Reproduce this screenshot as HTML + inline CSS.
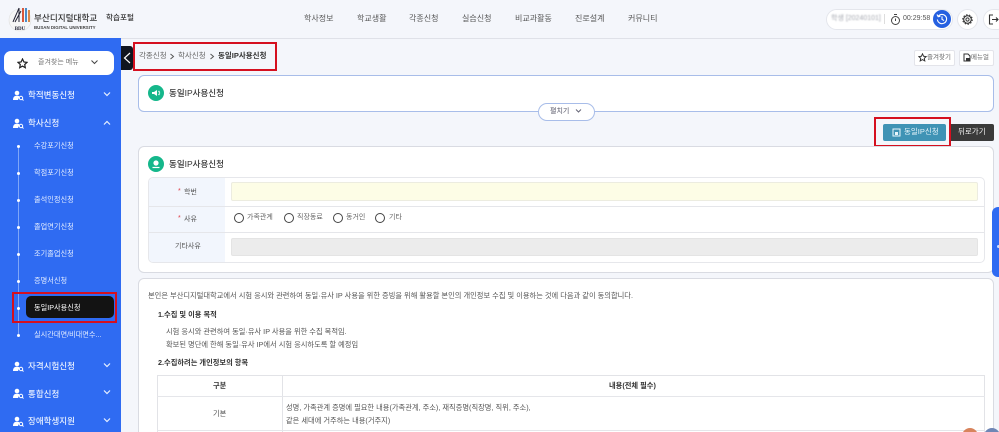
<!DOCTYPE html>
<html lang="ko"><head><meta charset="utf-8"><title>동일IP사용신청</title>
<style>
html,body{margin:0;padding:0;width:999px;height:432px;overflow:hidden}
body{background:#f4f6fb;font-family:"Liberation Sans","Noto Sans CJK KR",sans-serif;color:#444}
#w{left:0;top:0;width:999px;height:432px;overflow:hidden;background:#f4f6fb;filter:blur(.25px)}
div,span.a,svg.a{position:absolute}
.t{position:absolute;white-space:nowrap;line-height:12px;font-size:7.5px}
.nav{font-size:8px;color:#555;top:13px}
.side{background:#2f6bf2;left:0;top:38px;width:121px;height:394px}
.m{color:#e8f0ff;font-size:8.5px;left:28px;font-weight:500}
.s{color:#e3ecff;font-size:7.2px;left:34px}
.dot{left:17px;width:3px;height:3px;border-radius:50%;background:#fff}
.card{background:#fff;border:1px solid #d9dbe2;border-radius:6px;box-sizing:border-box}
.lb{background:#f2f6fd;left:149px;width:76px}
.line{background:#e5e6ea;height:1px}
.red{border:2px solid #d5101f;box-sizing:border-box}
.radio{width:10px;height:10px;box-sizing:border-box;border:1.2px solid #444;border-radius:50%;top:213px;background:#fff}
</style></head><body>
<svg width="0" height="0" style="position:absolute"><defs><g id="u"><circle cx="5" cy="3" r="2.3" fill="#fff"/><path d="M1 10C1 6.5 3 5.8 5 5.8C6 5.8 7 6 7.5 6.6L6 10Z" fill="#fff"/><circle cx="9" cy="8" r="1.7" fill="none" stroke="#fff"/><path d="M10.2 9.2L11.5 10.5" stroke="#fff"/></g></defs></svg>
<div id="w">

<!-- header -->
<div style="left:0;top:38px;width:999px;height:1px;background:#dfe1e8"></div>
<svg class="a" style="left:8px;top:5px" width="24" height="28" viewBox="0 0 24 28">
<circle cx="12" cy="15" r="11" fill="#f6f6f6" stroke="#e0e0e0" stroke-width=".6"/>
<path d="M5 17C7 12 9 8 11 3M11 3V17M7 17L13 6" stroke="#223" fill="none" stroke-width="1"/>
<rect x="14" y="3" width="2" height="14" fill="#d8583a"/><rect x="17" y="3" width="2" height="14" fill="#4b8ec8"/><rect x="20" y="5" width="2" height="12" fill="#d8884a"/>
<text x="12" y="25" font-size="5" font-weight="700" text-anchor="middle" fill="#223" font-family="Liberation Serif">BDU</text></svg>
<span class="t" style="left:34px;top:12px;font-size:8.6px;color:#333;font-weight:500">부산디지털대학교</span>
<span class="t" style="left:34px;top:22px;font-size:4.4px;color:#444;font-weight:700;line-height:12px">BUSAN DIGITAL UNIVERSITY</span>
<span class="t" style="left:106px;top:12px;font-size:7.6px;color:#333;font-weight:500">학습포털</span>

<span class="t nav" style="left:304px">학사정보</span>
<span class="t nav" style="left:357px">학교생활</span>
<span class="t nav" style="left:409px">각종신청</span>
<span class="t nav" style="left:462px">실습신청</span>
<span class="t nav" style="left:515px">비교과활동</span>
<span class="t nav" style="left:575px">진로설계</span>
<span class="t nav" style="left:628px">커뮤니티</span>

<div style="left:826px;top:9px;width:127px;height:21px;border-radius:11px;background:#fff;border:1px solid #e4e6ec;box-sizing:border-box"></div>
<span class="t" style="left:831px;top:13px;font-size:7px;color:#a5a8b0;filter:blur(.7px)">학생 [20240101]</span>
<div style="left:884px;top:14px;width:1px;height:10px;background:#ddd"></div>
<svg class="a" style="left:890px;top:13px" width="11" height="13" viewBox="0 0 11 13"><circle cx="5.5" cy="7.5" r="4" fill="none" stroke="#444"/><path d="M4 1.5H7M5.5 5.5V8" stroke="#444"/></svg>
<span class="t" style="left:903px;top:13px;font-size:7px;color:#555">00:29:58</span>
<div style="left:933px;top:10px;width:18px;height:18px;border-radius:50%;background:#2560e0"></div>
<svg class="a" style="left:936px;top:13px" width="12" height="12" viewBox="0 0 12 12"><path d="M2.2 3.4A4.6 4.6 0 1 1 1.4 6.5M6 3.4V6.3L8 7.6M1 1.5L2.2 3.7L4.4 3.2" fill="none" stroke="#fff" stroke-width="1.1"/></svg>
<div style="left:957px;top:9px;width:21px;height:21px;border-radius:50%;background:#fff;border:1px solid #e4e6ec;box-sizing:border-box"></div>
<svg class="a" style="left:962px;top:14px" width="11" height="11" viewBox="0 0 11 11"><circle cx="5.5" cy="5.5" r="1.6" fill="none" stroke="#333"/><circle cx="5.5" cy="5.5" r="3.8" fill="none" stroke="#333" stroke-width="1.1"/><circle cx="5.5" cy="5.5" r="4.8" fill="none" stroke="#333" stroke-width="1" stroke-dasharray="1.5 1.5"/></svg>
<div style="left:983px;top:9px;width:24px;height:21px;border-radius:11px;background:#fff;border:1px solid #e4e6ec;box-sizing:border-box"></div>
<svg class="a" style="left:988px;top:14px" width="11" height="11" viewBox="0 0 11 11"><path d="M5 1H1.5V10H5M4 5.5H10M8 3.5L10 5.5L8 7.5" fill="none" stroke="#333" stroke-width="1.1"/></svg>

<!-- sidebar -->
<div class="side"></div>
<div style="left:4px;top:51px;width:110px;height:24px;background:#fff;border-radius:7px"></div>
<svg class="a" style="left:17px;top:58px" width="11" height="11" viewBox="0 0 11 11"><path d="M5.5 1L6.9 4L10 4.4L7.7 6.5L8.3 9.7L5.5 8.1L2.7 9.7L3.3 6.5L1 4.4L4.1 4Z" fill="none" stroke="#222" stroke-width="1.2"/></svg>
<span class="t" style="left:38px;top:57px;font-size:7px;color:#777">즐겨찾는 메뉴</span>
<svg class="a" style="left:90px;top:59px" width="9" height="7" viewBox="0 0 9 7"><path d="M1.5 1.5L4.5 4.5L7.5 1.5" fill="none" stroke="#444" stroke-width="1"/></svg>

<svg class="a" style="left:12px;top:90px" width="12" height="11"><use href="#u"/></svg>
<svg class="a" style="left:12px;top:118px" width="12" height="11"><use href="#u"/></svg>
<svg class="a" style="left:12px;top:361px" width="12" height="11"><use href="#u"/></svg>
<svg class="a" style="left:12px;top:388px" width="12" height="11"><use href="#u"/></svg>
<svg class="a" style="left:12px;top:416px" width="12" height="11"><use href="#u"/></svg>
<span class="t m" style="top:89px">학적변동신청</span>
<span class="t m" style="top:117px">학사신청</span>
<span class="t m" style="top:360px">자격시험신청</span>
<span class="t m" style="top:388px">통합신청</span>
<span class="t m" style="top:415px">장애학생지원</span>
<svg class="a" style="left:103px;top:91px" width="8" height="6"><path d="M1 1.5L4 4.5L7 1.5" fill="none" stroke="#e8f0ff" stroke-width="1.2"/></svg>
<svg class="a" style="left:103px;top:120px" width="8" height="6"><path d="M1 4.5L4 1.5L7 4.5" fill="none" stroke="#e8f0ff" stroke-width="1.2"/></svg>
<svg class="a" style="left:103px;top:362px" width="8" height="6"><path d="M1 1.5L4 4.5L7 1.5" fill="none" stroke="#e8f0ff" stroke-width="1.2"/></svg>
<svg class="a" style="left:103px;top:389px" width="8" height="6"><path d="M1 1.5L4 4.5L7 1.5" fill="none" stroke="#e8f0ff" stroke-width="1.2"/></svg>
<svg class="a" style="left:103px;top:417px" width="8" height="6"><path d="M1 1.5L4 4.5L7 1.5" fill="none" stroke="#e8f0ff" stroke-width="1.2"/></svg>

<div style="left:18px;top:146px;width:1px;height:188px;background:#7fa6f7"></div>
<div class="dot" style="top:145px"></div><div class="dot" style="top:172px"></div><div class="dot" style="top:199px"></div><div class="dot" style="top:226px"></div><div class="dot" style="top:253px"></div><div class="dot" style="top:280px"></div><div class="dot" style="top:307px"></div><div class="dot" style="top:334px"></div>
<span class="t s" style="top:140px">수강포기신청</span>
<span class="t s" style="top:167px">학점포기신청</span>
<span class="t s" style="top:194px">출석인정신청</span>
<span class="t s" style="top:221px">졸업연기신청</span>
<span class="t s" style="top:248px">조기졸업신청</span>
<span class="t s" style="top:275px">증명서신청</span>
<div style="left:26px;top:296px;width:88px;height:22px;background:#131313;border-radius:5px"></div>
<span class="t s" style="top:302px;color:#fff">동일IP사용신청</span>
<span class="t s" style="top:329px">실시간대면/비대면수...</span>
<div class="red" style="left:12px;top:292px;width:105px;height:31px"></div>

<!-- sidebar toggle and breadcrumb -->
<div style="left:121px;top:46px;width:12px;height:24px;background:#10151f;border-radius:0 3px 3px 0"></div>
<svg class="a" style="left:122px;top:52px" width="10" height="12"><path d="M8 1L2.5 6L8 11" fill="none" stroke="#fff" stroke-width="1.2"/></svg>
<span class="t" style="left:139px;top:50px;color:#666">각종신청</span>
<svg class="a" style="left:169px;top:53px" width="6" height="7"><path d="M1.5 1L4.5 3.5L1.5 6" fill="none" stroke="#555"/></svg>
<span class="t" style="left:178px;top:50px;color:#666">학사신청</span>
<svg class="a" style="left:209px;top:53px" width="6" height="7"><path d="M1.5 1L4.5 3.5L1.5 6" fill="none" stroke="#555"/></svg>
<span class="t" style="left:218px;top:50px;color:#333;font-weight:700">동일IP사용신청</span>
<div class="red" style="left:133px;top:42px;width:144px;height:29px"></div>

<div style="left:914px;top:50px;width:41px;height:16px;background:#fff;border:1px solid #e3e4ea;box-sizing:border-box;border-radius:2px"></div>
<svg class="a" style="left:918px;top:53px" width="9" height="9" viewBox="0 0 11 11"><path d="M5.5 1L6.9 4L10 4.4L7.7 6.5L8.3 9.7L5.5 8.1L2.7 9.7L3.3 6.5L1 4.4L4.1 4Z" fill="none" stroke="#333" stroke-width="1.2"/></svg>
<span class="t" style="left:927px;top:52px;font-size:6.5px;color:#666">즐겨찾기</span>
<div style="left:959px;top:50px;width:35px;height:16px;background:#fff;border:1px solid #e3e4ea;box-sizing:border-box;border-radius:2px"></div>
<svg class="a" style="left:963px;top:53px" width="8" height="9" viewBox="0 0 8 9"><path d="M1 1H5L7 3V8H1Z" fill="none" stroke="#333"/><rect x="3" y="5" width="4" height="3" fill="#333"/></svg>
<span class="t" style="left:971px;top:52px;font-size:6.5px;color:#666">메뉴얼</span>

<!-- title box -->
<div style="left:138px;top:75px;width:856px;height:37px;background:#fff;border:1px solid #a8bde9;border-radius:6px;box-sizing:border-box"></div>
<div style="left:148px;top:85px;width:16px;height:16px;border-radius:50%;background:#15b78b"></div>
<svg class="a" style="left:151px;top:88px" width="10" height="10" viewBox="0 0 10 10"><path d="M1 4H3L6 2V8L3 6H1Z" fill="#fff"/><circle cx="8" cy="3.5" r=".7" fill="#fff"/><circle cx="8.5" cy="5" r=".7" fill="#fff"/><circle cx="8" cy="6.5" r=".7" fill="#fff"/></svg>
<span class="t" style="left:169px;top:87px;font-size:8.5px;color:#333;font-weight:500">동일IP사용신청</span>
<div style="left:538px;top:103px;width:57px;height:18px;background:#fff;border:1px solid #a8bde9;border-radius:9px;box-sizing:border-box"></div>
<span class="t" style="left:550px;top:106px;font-size:7px;color:#556">펼치기</span>
<svg class="a" style="left:575px;top:108px" width="7" height="6"><path d="M1 1.5L3.5 4L6 1.5" fill="none" stroke="#667"/></svg>

<!-- action buttons -->
<div style="left:883px;top:124px;width:63px;height:17px;background:#3f93b5;border-radius:2px"></div>
<svg class="a" style="left:892px;top:128px" width="9" height="9" viewBox="0 0 9 9"><rect x="1" y="1" width="7" height="7" fill="none" stroke="#e8f6fb"/><rect x="3" y="4" width="3" height="3" fill="#e8f6fb"/></svg>
<span class="t" style="left:904px;top:126px;font-size:7.5px;color:#e6f4fa">동일IP신청</span>
<div style="left:949px;top:124px;width:45px;height:17px;background:#3a3a3a;border-radius:0 2px 2px 0"></div>
<span class="t" style="left:958px;top:126px;font-size:7.5px;color:#f2f2f2">뒤로가기</span>
<div class="red" style="left:874px;top:117px;width:77px;height:30px"></div>

<!-- form card -->
<div class="card" style="left:138px;top:146px;width:856px;height:127px"></div>
<div style="left:148px;top:156px;width:16px;height:16px;border-radius:50%;background:#15b78b"></div>
<svg class="a" style="left:151px;top:159px" width="10" height="10" viewBox="0 0 10 10"><circle cx="5" cy="4" r="2.6" fill="#fff"/><path d="M1.5 8.5H8.5" stroke="#fff" stroke-width="1.2"/></svg>
<span class="t" style="left:169px;top:158px;font-size:8.5px;color:#333;font-weight:500">동일IP사용신청</span>
<div style="left:148px;top:177px;width:837px;height:86px;border:1px solid #e6e7eb;border-radius:5px;box-sizing:border-box"></div>
<div class="lb" style="top:178px;height:84px;border-radius:4px 0 0 4px"></div>
<div class="line" style="left:149px;top:206px;width:835px"></div>
<div class="line" style="left:149px;top:232px;width:835px"></div>
<span class="t" style="left:178px;top:186px;font-size:7px;color:#e0404a">*</span>
<span class="t" style="left:184px;top:187px;font-size:7px;color:#555">학번</span>
<span class="t" style="left:178px;top:213px;font-size:7px;color:#e0404a">*</span>
<span class="t" style="left:184px;top:214px;font-size:7px;color:#555">사유</span>
<span class="t" style="left:175px;top:241px;font-size:7px;color:#555">기타사유</span>
<div style="left:231px;top:182px;width:747px;height:19px;background:#fdfde6;border:1px solid #ecece0;border-radius:2px;box-sizing:border-box"></div>
<div style="left:231px;top:238px;width:747px;height:18px;background:#ececec;border:1px solid #e4e4e4;border-radius:2px;box-sizing:border-box"></div>
<div class="radio" style="left:234px"></div><span class="t" style="left:247px;top:212px;font-size:7px;color:#666">가족관계</span>
<div class="radio" style="left:284px"></div><span class="t" style="left:297px;top:212px;font-size:7px;color:#666">직장동료</span>
<div class="radio" style="left:333px"></div><span class="t" style="left:346px;top:212px;font-size:7px;color:#666">동거인</span>
<div class="radio" style="left:375px"></div><span class="t" style="left:389px;top:212px;font-size:7px;color:#666">기타</span>

<!-- agreement card -->
<div class="card" style="left:138px;top:278px;width:856px;height:170px"></div>
<span class="t" style="left:148px;top:290px;font-size:7.25px;color:#555">본인은 부산디지털대학교에서 시험 응시와 관련하여 동일·유사 IP 사용을 위한 증빙을 위해 활용할 본인의 개인정보 수집 및 이용하는 것에 다음과 같이 동의합니다.</span>
<span class="t" style="left:158px;top:309px;font-size:7.25px;color:#333;font-weight:700">1.수집 및 이용 목적</span>
<span class="t" style="left:166px;top:326px;font-size:7.25px;color:#555">시험 응시와 관련하여 동일·유사 IP 사용을 위한 수집 목적임.</span>
<span class="t" style="left:166px;top:339px;font-size:7.25px;color:#555">확보된 명단에 한해 동일·유사 IP에서 시험 응시하도록 할 예정임</span>
<span class="t" style="left:158px;top:357px;font-size:7.25px;color:#333;font-weight:700">2.수집하려는 개인정보의 항목</span>
<div style="left:157px;top:375px;width:828px;height:71px;border:1px solid #e2e3e7;box-sizing:border-box"></div>
<div style="left:282px;top:375px;width:1px;height:57px;background:#e2e3e7"></div>
<div class="line" style="left:157px;top:396px;width:828px"></div>
<div class="line" style="left:157px;top:430px;width:828px"></div>
<span class="t" style="left:213px;top:380px;font-size:7.25px;color:#333;font-weight:700">구분</span>
<span class="t" style="left:609px;top:380px;font-size:7.25px;color:#333;font-weight:700">내용(전체 필수)</span>
<span class="t" style="left:213px;top:408px;font-size:7.25px;color:#555">기본</span>
<span class="t" style="left:286px;top:402px;font-size:7.25px;color:#555">성명, 가족관계 증명에 필요한 내용(가족관계, 주소), 재직증명(직장명, 직위, 주소),</span>
<span class="t" style="left:286px;top:415px;font-size:7.25px;color:#555">같은 세대에 거주하는 내용(거주지)</span>

<!-- right floats -->
<div style="left:992px;top:207px;width:10px;height:70px;background:#2f6bf2;border-radius:6px 0 0 6px"></div>
<div style="left:997px;top:245px;width:3px;height:3px;border-radius:50%;background:#cfe0ff"></div>
<div style="left:962px;top:428px;width:16px;height:16px;border-radius:50%;background:#d8835c"></div>
<div style="left:984px;top:428px;width:16px;height:16px;border-radius:50%;background:#6f86b5"></div>
</div>
</body></html>
